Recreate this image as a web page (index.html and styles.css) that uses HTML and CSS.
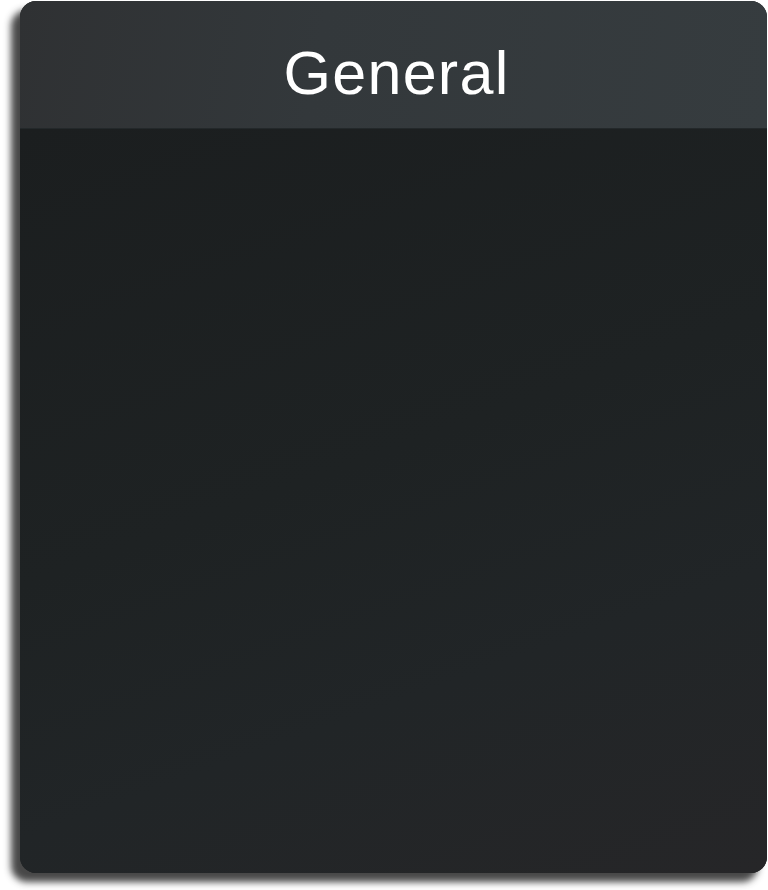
FILE: index.html
```html
<!DOCTYPE html>
<html lang="en">
<head>
<meta charset="utf-8">
<title>General</title>
<link rel="stylesheet" href="styles.css">
</head>
<body>
<div class="panel">
  <div class="panel-header"><h1 class="panel-title">General</h1></div>
  <div class="panel-body"></div>
</div>
</body>
</html>
```
FILE: styles.css
```css
html, body {
  margin: 0;
  padding: 0;
  background: #ffffff;
}
body {
  box-sizing: border-box;
  min-height: 890px;
  padding: 1px 1px 17px 20px;
  font-family: "Liberation Sans", Arial, sans-serif;
}
.panel {
  width: 747px;
  height: 872px;
  border-radius: 16px;
  overflow: hidden;
  display: flex;
  flex-direction: column;
  box-shadow: -9px 9px 7px rgba(40, 40, 40, 0.85);
  background: #1e2223;
}
.panel-header {
  box-sizing: border-box;
  height: 128px;
  flex: none;
  padding-top: 42px;
  text-align: center;
  background: linear-gradient(100deg, #2f3133 0%, #33383b 40%, #363c3f 100%);
  border-bottom: 1px solid #23282a;
}
.panel-title {
  margin: 0 0 0 6px;
  font-weight: normal;
  font-size: 61px;
  line-height: 1;
  color: #ffffff;
  letter-spacing: 1.3px;
}
.panel-body {
  flex: 1;
  background: linear-gradient(160deg, #1b1e1f 0%, #1e2223 45%, #212527 70%, #262628 100%);
}
```
